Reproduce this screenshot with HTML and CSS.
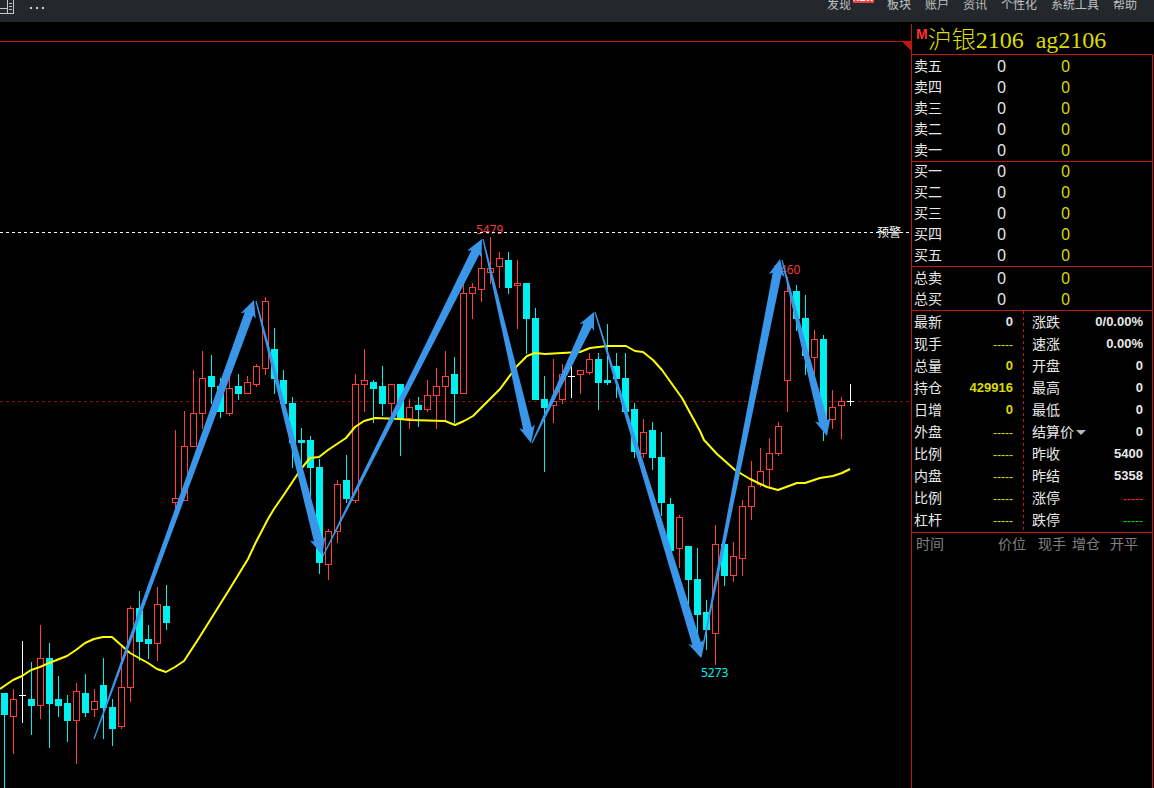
FILE: index.html
```
<!DOCTYPE html>
<html lang="zh-CN">
<head>
<meta charset="utf-8">
<title>沪银2106 ag2106</title>
<link rel="stylesheet" href="styles.css">
</head>
<body>
<header class="topbar">
  <div class="tools">
    <button class="tool" aria-label="布局">
      <svg width="14" height="14" viewBox="0 0 14 14" shape-rendering="crispEdges"><path d="M0 8.500H7M0 13.500H14M7.500 0V13M13.500 0V13M9 3.500H12M9 6.500H12M9 9.500H12" fill="none" stroke="#c4c7ca"/></svg>
    </button>
    <button class="tool" aria-label="更多">
      <svg width="14" height="14" viewBox="0 0 14 14" shape-rendering="crispEdges"><path d="M0 7h2v2H0zM6 7h2v2H6zM12 7h2v2h-2z" fill="#d0d2d4"/></svg>
    </button>
  </div>
  <nav class="menu">
    <a href="#" class="has-badge">发现<span class="badge">NEW</span></a>
    <a href="#">板块</a>
    <a href="#">账户</a>
    <a href="#">资讯</a>
    <a href="#">个性化</a>
    <a href="#">系统工具</a>
    <a href="#">帮助</a>
  </nav>
</header>
<main class="workspace">
  <section class="chart" aria-label="K线图">
    <svg id="plot" class="plot" viewBox="0 22 911 766" preserveAspectRatio="xMinYMin meet">
      <g shape-rendering="crispEdges">
        <path class="rule" d="M0 41.500H911"/>
        <path class="corner" d="M902 42H911V51Z"/>
        <path class="last-line" d="M0 401.500H911"/>
      </g>
      <g id="candles" shape-rendering="crispEdges"></g>
      <polyline class="average" points="0,689 13,680 22,676 31,670 40,667 49,663 67,656 76,650 85,643 94,639 103,637 112,637 121,645 130,653 148,663 157,669 166,672 175,667 184,661 199,638 229,590 248,559 256,542 268,519 274,509 283,496 301,469 310,458 319,457 328,450 346,438 355,427 364,421 375,418 400,419 410,420 445,421 455,425 464,421 473,416 500,389 517,366 527,356 535,353 545,354 562,353 580,352 590,348 607,346 626,346 635,351 643,352 653,360 662,370 682,398 700,431 704,440 717,454 735,470 750,479 767,487 778,490 797,483 805,483 820,478 833,476 842,473 850,469"/>
      <text class="mark high" x="476" y="234">5479</text>
      <text class="mark high" x="773" y="274">5460</text>
      <text class="mark low" x="701" y="677">5273</text>
      <path class="alert-line" shape-rendering="crispEdges" d="M0 232.500H911"/>
      <text class="alert" x="877" y="237">预警</text>
      <g id="arrows"></g>
    </svg>
  </section>
  <aside class="quote">
    <h1 class="title"><span class="flag">M</span>沪银2106&nbsp; ag2106</h1>
    <div class="panel">
      <table class="book asks">
        <tbody>
          <tr><th>卖五</th><td>0</td><td>0</td></tr>
          <tr><th>卖四</th><td>0</td><td>0</td></tr>
          <tr><th>卖三</th><td>0</td><td>0</td></tr>
          <tr><th>卖二</th><td>0</td><td>0</td></tr>
          <tr><th>卖一</th><td>0</td><td>0</td></tr>
        </tbody>
      </table>
      <table class="book divided">
        <tbody>
          <tr><th>买一</th><td>0</td><td>0</td></tr>
          <tr><th>买二</th><td>0</td><td>0</td></tr>
          <tr><th>买三</th><td>0</td><td>0</td></tr>
          <tr><th>买四</th><td>0</td><td>0</td></tr>
          <tr><th>买五</th><td>0</td><td>0</td></tr>
        </tbody>
      </table>
      <table class="book divided totals">
        <tbody>
          <tr><th>总卖</th><td>0</td><td>0</td></tr>
          <tr><th>总买</th><td>0</td><td>0</td></tr>
        </tbody>
      </table>
      <div class="stats divided">
        <dl class="col left">
          <div><dt>最新</dt><dd class="white">0</dd></div>
          <div><dt>现手</dt><dd class="none">-----</dd></div>
          <div><dt>总量</dt><dd>0</dd></div>
          <div><dt>持仓</dt><dd>429916</dd></div>
          <div><dt>日增</dt><dd>0</dd></div>
          <div><dt>外盘</dt><dd class="none">-----</dd></div>
          <div><dt>比例</dt><dd class="none">-----</dd></div>
          <div><dt>内盘</dt><dd class="none">-----</dd></div>
          <div><dt>比例</dt><dd class="none">-----</dd></div>
          <div><dt>杠杆</dt><dd class="none">-----</dd></div>
        </dl>
        <svg class="split" width="1" height="220" shape-rendering="crispEdges"><path d="M.5 0V220" stroke="#c01810" stroke-dasharray="3 3"/></svg>
        <dl class="col right">
          <div><dt>涨跌</dt><dd>0/0.00%</dd></div>
          <div><dt>速涨</dt><dd>0.00%</dd></div>
          <div><dt>开盘</dt><dd>0</dd></div>
          <div><dt>最高</dt><dd>0</dd></div>
          <div><dt>最低</dt><dd>0</dd></div>
          <div><dt><button class="picker">结算价<svg width="10" height="5" viewBox="0 0 10 5"><path d="M0 0H10L5 5Z" fill="#b8b8b8"/></svg></button></dt><dd>0</dd></div>
          <div><dt>昨收</dt><dd>5400</dd></div>
          <div><dt>昨结</dt><dd>5358</dd></div>
          <div><dt>涨停</dt><dd class="none red">-----</dd></div>
          <div><dt>跌停</dt><dd class="none green">-----</dd></div>
        </dl>
      </div>
      <table class="ticks divided">
        <colgroup><col class="time"><col class="price"><col class="volume"><col class="change"><col></colgroup>
        <thead><tr><th>时间</th><th>价位</th><th>现手</th><th>增仓</th><th>开平</th></tr></thead>
      </table>
    </div>
  </aside>
</main>
<script src="chart.js"></script>
</body>
</html>
```
FILE: styles.css
```
* { box-sizing: border-box; }

body {
  margin: 0;
  min-height: 100vh;
  display: flex;
  flex-direction: column;
  background: #000;
  color: #e8e8e8;
  font-family: "Liberation Sans", "Noto Sans CJK SC", sans-serif;
  font-size: 14px;
  overflow: hidden;
}

button {
  padding: 0;
  border: 0;
  background: none;
  color: inherit;
  font: inherit;
}

.topbar {
  display: flex;
  justify-content: space-between;
  height: 22px;
  background: #24272b;
}

.tools { display: flex; gap: 16px; }
.tool { display: flex; height: 14px; }

.menu {
  display: flex;
  gap: 14px;
  padding-right: 17px;
  font-size: 12px;
  line-height: 11px;
}

.menu a {
  position: relative;
  color: #c0c3c6;
  text-decoration: none;
  white-space: nowrap;
}

.menu .has-badge { margin-right: 22px; }

.badge {
  position: absolute;
  left: 26px;
  bottom: 19px;
  width: 21px;
  height: 12px;
  background: #f43e3e;
  color: #fff;
  font-size: 9px;
  font-weight: bold;
  line-height: 15px;
  text-align: center;
}

.workspace {
  flex: 1;
  display: grid;
  grid-template-columns: minmax(0, 1fr) 243px;
}

.plot { display: block; width: 100%; }
.rule { stroke: #c01810; }
.corner { fill: #c01810; }
.last-line { stroke: #8c1010; stroke-dasharray: 3 3; }
.alert-line { stroke: #fff; stroke-dasharray: 3 3; }
.average { fill: none; stroke: #ff0; stroke-width: 2; stroke-linejoin: round; }
.mark { font: 12px "Noto Sans", sans-serif; }
.high { fill: #f03c3c; }
.low { fill: #00f0f0; }
.alert { fill: #fff; font: 12px "Noto Sans CJK SC", sans-serif; }
.up { fill: #000; stroke: #ff3c3c; }
.down { fill: #00f0f0; stroke: #00f0f0; }
.flat { stroke: #fff; }
.arrow { fill: #3a96e8; }

.quote {
  margin-top: 2px;
  border-left: 1px solid #c01810;
}

.title {
  display: flex;
  height: 30px;
  margin: 0;
  padding-left: 4px;
  color: #dcdc00;
  font: 300 24px/33px "Liberation Serif", "Noto Sans CJK SC", serif;
  white-space: nowrap;
}

.flag {
  color: #ff3030;
  font: bold 14px/20px "Liberation Sans", sans-serif;
}

.panel {
  min-height: calc(100% - 30px);
  margin-right: 1px;
  border-top: 1px solid #c01810;
  border-right: 1px solid #c01810;
}

.divided { box-shadow: inset 0 1px #c01810; }

.book {
  width: 100%;
  border-spacing: 0;
  table-layout: fixed;
}

.asks { padding-top: 1px; }
.totals { padding-top: 2px; }

.book th, .book td {
  height: 21px;
  padding: 0;
  line-height: 21px;
}

.book th {
  width: 78px;
  padding-left: 2px;
  font-size: 14px;
  font-weight: normal;
  text-align: left;
}

.book td {
  width: 64px;
  padding-left: 7px;
  font-family: "Noto Sans", sans-serif;
  font-size: 16px;
  text-align: left;
}

.book td:last-child { width: auto; color: #dcdc00; }

.stats {
  display: flex;
  padding: 1px 0;
}

.col { margin: 0; }
.col div { display: flex; justify-content: space-between; line-height: 22px; }
.col dd { margin: 0; font-size: 13px; font-weight: bold; }
.col .none { padding-top: 2px; font-size: 12px; font-weight: normal; line-height: 20px; }
.left { width: 111px; padding: 0 10px 0 2px; }
.left dd { color: #dcdc00; }
.left .white { color: #e8e8e8; }
.right { flex: 1; padding: 0 9px 0 8px; }
.right .red { color: #ff2020; }
.right .green { color: #00d800; }
.picker { display: flex; align-items: center; gap: 2px; }

.ticks {
  width: 100%;
  padding-top: 1px;
  border-spacing: 0;
  table-layout: fixed;
  color: #808080;
}

.time { width: 82px; }
.price { width: 40px; }
.volume { width: 34px; }
.change { width: 38px; }

.ticks th {
  padding: 0 0 0 4px;
  font-weight: normal;
  line-height: 22px;
  text-align: left;
  white-space: nowrap;
}
```
FILE: chart.js
```
// Each row: kind (u = up, d = down, f = flat), high, body top, body bottom, low
const rows = `d 693 693 715 788|u 689 699 717 754|f 641 695 696 723|d 662 699 706 735|u 625 658 706 719
d 643 658 704 748|d 676 699 706 717|d 695 703 721 742|u 683 691 721 764|d 674 693 713 717
u 689 701 710 717|d 658 685 708 739|d 699 707 729 746|u 647 687 727 729|u 606 608 688 702
d 591 608 642 661|d 625 639 644 659|u 587 604 644 661|d 585 606 623 630|u 430 498 503 520
u 411 446 501 501|u 370 413 447 447|u 351 378 414 429|d 355 376 387 404|d 378 386 412 418
u 377 388 414 416|d 374 386 394 400|u 376 382 394 394|u 364 366 385 387|u 297 301 369 375
d 328 349 379 394|d 370 380 404 404|d 397 403 443 468|d 428 440 443 470|d 436 440 468 500
d 459 467 563 574|u 529 531 565 580|u 480 484 532 543|d 455 480 499 503|u 374 384 501 503
u 349 380 385 412|d 380 382 389 423|d 366 386 404 416|u 384 384 404 418|d 384 384 419 456
u 399 407 419 429|d 397 405 410 427|u 380 395 410 412|u 368 386 396 429|u 351 376 387 421
d 357 374 394 423|u 283 293 394 394|u 283 287 294 319|u 253 268 290 302|u 237 268 273 284
u 252 258 267 288|d 252 260 288 294|u 260 283 286 329|d 283 283 319 354|d 308 318 400 400
d 376 399 408 472|u 359 401 406 423|u 364 374 400 404|f 366 376 377 398|u 370 370 375 394
u 353 359 373 375|d 353 359 383 410|d 324 380 383 385|d 353 366 379 398|d 353 378 412 412
d 403 409 452 458|u 419 432 454 458|d 422 430 458 470|d 432 457 503 516|d 498 504 551 551
u 515 517 549 568|d 546 546 580 607|d 548 579 615 637|d 600 612 630 650|u 525 544 634 665
d 544 544 576 586|u 542 556 576 582|u 500 506 559 576|u 461 486 507 520|u 448 471 485 487
u 438 453 470 487|u 422 426 454 456|u 277 291 381 412|d 285 291 319 331|d 295 318 356 375
u 330 339 358 378|d 335 339 420 441|u 390 407 420 429|u 397 401 406 439|f 384 401 402 406`.split(/[|\n]/);

const arrows = [
  [94, 739, 254, 300], [256, 301, 322, 555], [323, 556, 482, 239], [483, 239, 531, 443],
  [532, 443, 594, 312], [595, 312, 701, 658], [701, 657, 780, 259], [782, 260, 827, 436]
];

const names = { u: "up", d: "down", f: "flat" };
const step = 9;

function add(parent, d, cls) {
  const p = document.createElementNS("http://www.w3.org/2000/svg", "path");
  p.setAttribute("d", d);
  p.setAttribute("class", cls);
  parent.appendChild(p);
}

const candles = document.getElementById("candles");
rows.forEach((row, i) => {
  const [kind, ...v] = row.split(" ");
  const [high, top, bottom, low] = v.map(Number);
  const x = 4.5 + i * step;
  const wick = `M${x} ${high}V${low}`;
  const body = kind === "f"
    ? `M${x - 3.5} ${top + 0.5}h7`
    : `M${x - 3} ${top + 0.5}h6V${bottom - 0.5}h-6Z`;
  add(candles, wick, names[kind]);
  add(candles, body, names[kind]);
});

const layer = document.getElementById("arrows");
arrows.forEach(([x1, y1, x2, y2]) => {
  const len = Math.hypot(x2 - x1, y2 - y1);
  const ux = (x2 - x1) / len;
  const uy = (y2 - y1) / len;
  const at = (back, side) =>
    `${(x2 - ux * back - uy * side).toFixed(1)} ${(y2 - uy * back + ux * side).toFixed(1)}`;
  const outline = [at(len, 0.6), at(15, 4.5), at(17, 8), at(0, 0), at(17, -8), at(15, -4.5), at(len, -0.6)];
  add(layer, `M${outline.join("L")}Z`, "arrow");
});
```
